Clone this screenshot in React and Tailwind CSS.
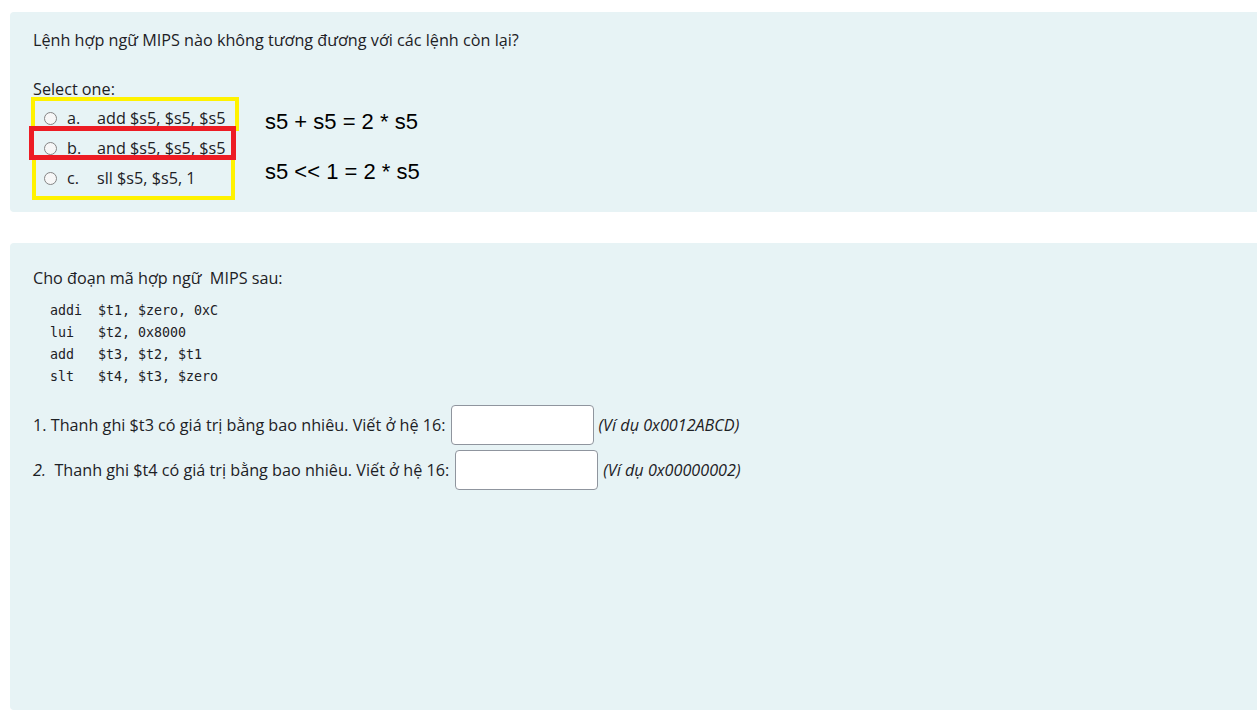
import React from 'react';

const options = [
    { key: 'a.', text: 'add $s5, $s5, $s5' },
    { key: 'b.', text: 'and $s5, $s5, $s5' },
    { key: 'c.', text: 'sll $s5, $s5, 1' },
];

const code = [
    ['addi', '$t1, $zero, 0xC'],
    ['lui', '$t2, 0x8000'],
    ['add', '$t3, $t2, $t1'],
    ['slt', '$t4, $t3, $zero'],
];

const Radio = () => (
    <span className="block w-[13px] h-[13px] rounded-full border border-[#858585] bg-[#f7f7f7] shrink-0"></span>
);

const App = () => {
    return (
        <div className="w-[1257px] h-[718px] overflow-hidden bg-white pt-[12px] pl-[10px] text-[#1d2125] text-[16.2px] leading-[22px]" style={{ fontFamily: '"Open Sans", "Noto Sans", sans-serif' }}>
            {/* Question 1 */}
            <div className="bg-[#e7f3f5] rounded-l-[4px] pt-[17px] pl-[23px] h-[200px]">
                <p>Lệnh hợp ngữ MIPS nào không tương đương với các lệnh còn lại?</p>
                <p className="mt-[27px]">Select one:</p>
                <div className="flex mt-[3px]">
                    <div className="relative w-[200px]">
                        {options.map((o) => (
                            <div key={o.key} className="flex items-center h-[30px]">
                                <span className="ml-[11px]"><Radio /></span>
                                <span className="ml-[10px] w-[30px]">{o.key}</span>
                                <span>{o.text}</span>
                            </div>
                        ))}
                        {/* annotation boxes */}
                        <div className="absolute left-[-2px] top-[-6px] w-[208px] h-[34px] border-[4px] border-[#fff200]"></div>
                        <div className="absolute left-[-1px] top-[53px] w-[203px] h-[44px] border-[4px] border-[#fff200]"></div>
                        <div className="absolute left-[-4px] top-[23px] w-[207px] h-[34px] border-[5px] border-[#ed1c24]"></div>
                    </div>
                    <div className="ml-[32px] pt-[7px] flex flex-col gap-[26px] text-[22px] leading-[24px] text-black" style={{ fontFamily: '"Liberation Sans", Arial, sans-serif' }}>
                        <span>s5 + s5 = 2 * s5</span>
                        <span>s5 &lt;&lt; 1 = 2 * s5</span>
                    </div>
                </div>
            </div>

            {/* Question 2 */}
            <div className="mt-[31px] bg-[#e7f3f5] rounded-l-[4px] pt-[24px] pl-[23px] h-[467px]">
                <p className="whitespace-pre">Cho đoạn mã hợp ngữ  MIPS sau:</p>
                <div className="mt-[11px] ml-[17px] text-[13.3px] leading-[22px] text-[#1d2125]" style={{ fontFamily: '"DejaVu Sans Mono", "Liberation Mono", monospace' }}>
                    {code.map(([op, args]) => (
                        <div key={op} className="flex">
                            <span className="w-[48px]">{op}</span>
                            <span className="whitespace-pre">{args}</span>
                        </div>
                    ))}
                </div>
                <div className="mt-[14px]">
                    <div className="flex items-center h-[45px]">
                        <span>1. Thanh ghi $t3 có giá trị bằng bao nhiêu. Viết ở hệ 16:</span>
                        <input type="text" className="ml-[5px] w-[143px] h-[40px] bg-white border border-[#8f959e] rounded-[4px]" />
                        <span className="ml-[5px] italic">(Ví dụ 0x0012ABCD)</span>
                    </div>
                    <div className="flex items-center h-[45px]">
                        <span className="whitespace-pre"><i>2.</i>  Thanh ghi $t4 có giá trị bằng bao nhiêu. Viết ở hệ 16:</span>
                        <input type="text" className="ml-[6px] w-[143px] h-[40px] bg-white border border-[#8f959e] rounded-[4px]" />
                        <span className="ml-[5px] italic">(Ví dụ 0x00000002)</span>
                    </div>
                </div>
            </div>
        </div>
    );
};

export default App;
